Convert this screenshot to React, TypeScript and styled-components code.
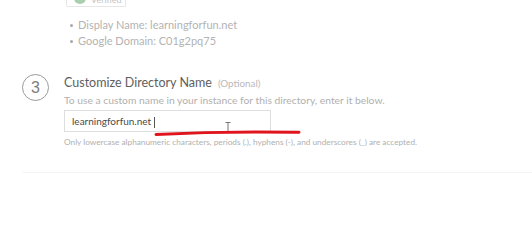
import React from "react";
import styled, { createGlobalStyle } from "styled-components";

const Global = createGlobalStyle`
  html, body { margin: 0; padding: 0; background: #fff; }
  body { font-family: Lato, "Open Sans", sans-serif; width: 532px; height: 202px; overflow: hidden; }
`;

const Page = styled.div`
  position: relative;
  width: 532px;
  height: 202px;
  display: flex;
  flex-direction: column;
`;

const TopBadge = styled.div`
  margin-left: 66px;
  width: 60px;
  height: 7px;
  border: 1px solid #e6e6e6;
  border-top: none;
  border-radius: 0 0 2px 2px;
  display: flex;
  align-items: flex-end;
  gap: 5px;
  padding-left: 7px;
  box-sizing: border-box;
  overflow: hidden;
`;

const GreenDot = styled.div`
  width: 12px;
  height: 12px;
  border-radius: 50%;
  background: #a9cfae;
  flex-shrink: 0;
  transform: translateY(-2px);
`;

const BadgeText = styled.span`
  font-size: 9px;
  line-height: 9px;
  color: #c4c4c4;
  transform: translateY(-2px);
`;

const Bullets = styled.ul`
  margin: 10px 0 0 0;
  padding: 0 0 0 78px;
  list-style: none;
`;

const Bullet = styled.li`
  position: relative;
  font-size: 11px;
  line-height: 16px;
  color: #b3b3b3;
  &::before {
    content: "";
    position: absolute;
    left: -8px;
    top: 7px;
    width: 3px;
    height: 3px;
    border-radius: 50%;
    background: #a8a8a8;
  }
`;

const Step = styled.div`
  display: flex;
  margin-top: 25px;
  padding-left: 22px;
`;

const StepNum = styled.div`
  width: 27px;
  height: 27px;
  border: 1.5px solid #9a9a9a;
  border-radius: 50%;
  box-sizing: border-box;
  color: #7e7e7e;
  font-family: "Liberation Sans", Arial, sans-serif;
  font-size: 16px;
  display: flex;
  align-items: center;
  justify-content: center;
  flex-shrink: 0;
`;

const StepBody = styled.div`
  margin-left: 15px;
  display: flex;
  flex-direction: column;
`;

const Title = styled.div`
  font-size: 12.5px;
  color: #5e5e5e;
  line-height: 18px;
  display: flex;
  align-items: baseline;
`;

const Optional = styled.span`
  font-size: 9.8px;
  color: #b8b8b8;
  margin-left: 6px;
`;

const Desc = styled.div`
  font-size: 10.3px;
  color: #b0b0b0;
  line-height: 14px;
  margin-top: 1px;
`;

const InputWrap = styled.div`
  position: relative;
  margin-top: 3px;
  width: 207px;
  height: 22px;
  border: 1px solid #dedede;
  box-sizing: border-box;
  display: flex;
  align-items: center;
  padding-left: 7px;
`;

const InputText = styled.span`
  font-size: 10px;
  color: #4a4a4a;
`;

const Caret = styled.span`
  display: inline-block;
  width: 1px;
  height: 11px;
  background: #555;
  margin-left: 3px;
  margin-top: 2px;
`;

const IBeam = styled.svg`
  position: absolute;
  left: 160px;
  top: 11px;
`;

const RedMark = styled.svg`
  position: absolute;
  left: 90px;
  top: 19px;
  overflow: visible;
`;

const Hint = styled.div`
  font-size: 8.25px;
  color: #b0b0b0;
  margin-top: 5px;
  line-height: 10px;
`;

const Divider = styled.div`
  margin-top: 25px;
  margin-left: 23px;
  height: 1px;
  background: #f3f3f3;
`;

export default function App() {
  return (
    <>
      <Global />
      <Page>
        <TopBadge>
          <GreenDot />
          <BadgeText>Verified</BadgeText>
        </TopBadge>
        <Bullets>
          <Bullet>Display Name: learningforfun.net</Bullet>
          <Bullet>Google Domain: C01g2pq75</Bullet>
        </Bullets>
        <Step>
          <StepNum>3</StepNum>
          <StepBody>
            <Title>
              Customize Directory Name <Optional>(Optional)</Optional>
            </Title>
            <Desc>To use a custom name in your instance for this directory, enter it below.</Desc>
            <InputWrap>
              <InputText>learningforfun.net</InputText>
              <Caret />
              <IBeam width="6" height="10" viewBox="0 0 6 10">
                <path d="M0.5 0.5h5M3 0.5v9M0.5 9.5h5" stroke="#777" strokeWidth="1" fill="none" />
              </IBeam>
              <RedMark width="145" height="6" viewBox="0 0 145 6">
                <path d="M1 4.5 C 30 3, 60 2, 100 2 S 135 2, 144 2.2" stroke="#e0141c" strokeWidth="3" fill="none" strokeLinecap="round" />
              </RedMark>
            </InputWrap>
            <Hint>
              Only lowercase alphanumeric characters, periods (.), hyphens (-), and underscores (_) are accepted.
            </Hint>
          </StepBody>
        </Step>
        <Divider />
      </Page>
    </>
  );
}
